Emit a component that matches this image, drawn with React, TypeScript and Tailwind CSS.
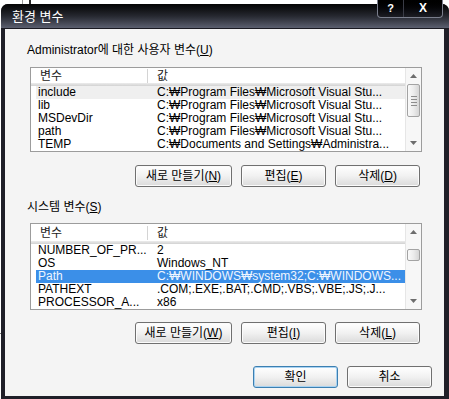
import React from "react";

const F = "font-['Liberation_Sans','Noto_Sans_CJK_KR',sans-serif]";

function U({ c }: { c: string }) {
  return <span className="underline underline-offset-[1px]">{c}</span>;
}

type Row = { name: string; value: string; sel?: "gray" | "blue" };

function Arrow({ up }: { up: boolean }) {
  return (
    <svg width="7" height="4" viewBox="0 0 7 4">
      {up ? (
        <path d="M0 4 L3.5 0 L7 4 Z" fill="#6d6d6d" />
      ) : (
        <path d="M0 0 L3.5 4 L7 0 Z" fill="#6d6d6d" />
      )}
    </svg>
  );
}

function Scroll({ spacer, thumb, grip }: { spacer: string; thumb: string; grip: boolean }) {
  return (
    <div className="w-[16px] flex flex-col bg-[#f7f7f7] border-l border-[#e6e6e6]">
      <div className="h-[16px] flex items-center justify-center">
        <Arrow up />
      </div>
      <div className={spacer} />
      <div
        className={`${thumb} ml-[1px] mr-[1px] rounded-[2px] border border-[#a3a3a3] bg-gradient-to-r from-[#fafafa] via-[#ececec] to-[#d6d6d6] flex flex-col items-center justify-center gap-[2px]`}
      >
        {grip && (
          <>
            <div className="w-[6px] h-px bg-[#8c8c8c]" />
            <div className="w-[6px] h-px bg-[#8c8c8c]" />
            <div className="w-[6px] h-px bg-[#8c8c8c]" />
            <div className="w-[6px] h-px bg-[#8c8c8c]" />
          </>
        )}
      </div>
      <div className="flex-1" />
      <div className="h-[16px] flex items-center justify-center">
        <Arrow up={false} />
      </div>
    </div>
  );
}

function ListBox({
  rows,
  height,
  spacer,
  thumb,
  grip,
}: {
  rows: Row[];
  height: string;
  spacer: string;
  thumb: string;
  grip: boolean;
}) {
  return (
    <div className={`ml-[25px] w-[392px] ${height} flex border border-[#9c9c9c] bg-white`}>
      <div className="flex-1 flex flex-col overflow-hidden">
        <div className="flex h-[17px] items-center text-[12px] text-[#222] bg-white">
          <div className="w-[117px] h-[14px] pl-[9px] leading-[14px] border-r border-[#d4d4d4]">변수</div>
          <div className="pl-[9px] leading-[14px]">값</div>
        </div>
        <div className="h-[3px] bg-gradient-to-b from-[#ececec] to-[#d2d2d2]" />
        {rows.map((r) => (
          <div
            key={r.name}
            className={`ml-[5px] flex h-[13px] shrink-0 text-[12px] leading-[13px] whitespace-nowrap ${
              r.sel === "blue"
                ? "bg-[#3b8fe8] text-[#eef5ff]"
                : r.sel === "gray"
                ? "bg-[#efefef] text-black"
                : "text-black"
            }`}
          >
            <div className="w-[119px] pl-[2px] overflow-hidden">{r.name}</div>
            <div className="pl-[2px]">{r.value}</div>
          </div>
        ))}
      </div>
      <Scroll spacer={spacer} thumb={thumb} grip={grip} />
    </div>
  );
}

function Btn({
  children,
  w,
  def,
}: {
  children: React.ReactNode;
  w: string;
  def?: boolean;
}) {
  return (
    <div
      className={`${w} h-[22px] rounded-[3px] border flex items-center justify-center text-[12px] leading-[14px] text-black bg-gradient-to-b from-[#ffffff] via-[#f1f1f1] to-[#dadada] ${
        def
          ? "border-[#3c7fb1] shadow-[inset_0_0_0_1px_#a9d3f2]"
          : "border-[#707070] shadow-[inset_0_0_0_1px_#fbfbfb]"
      }`}
    >
      {children}
    </div>
  );
}

const userRows: Row[] = [
  { name: "include", value: "C:₩Program Files₩Microsoft Visual Stu...", sel: "gray" },
  { name: "lib", value: "C:₩Program Files₩Microsoft Visual Stu..." },
  { name: "MSDevDir", value: "C:₩Program Files₩Microsoft Visual Stu..." },
  { name: "path", value: "C:₩Program Files₩Microsoft Visual Stu..." },
  { name: "TEMP", value: "C:₩Documents and Settings₩Administra..." },
];

const sysRows: Row[] = [
  { name: "NUMBER_OF_PR...", value: "2" },
  { name: "OS", value: "Windows_NT" },
  { name: "Path", value: "C:₩WINDOWS₩system32;C:₩WINDOWS...", sel: "blue" },
  { name: "PATHEXT", value: ".COM;.EXE;.BAT;.CMD;.VBS;.VBE;.JS;.J..." },
  { name: "PROCESSOR_A...", value: "x86" },
];

export default function App() {
  return (
    <div className={`relative w-[449px] h-[399px] bg-white overflow-hidden ${F}`}>
      <div className="absolute left-[22px] top-0 w-px h-[6px] bg-[#9a9a9a]" />
      <div className="absolute left-[29px] top-0 w-[2px] h-[6px] bg-[#2a2a2a]" />
      <div className="absolute left-0 top-[333px] w-[2px] h-px bg-[#777]" />
      <div className="flex pt-[4px] pl-[1px]">
        <div className="relative flex flex-col w-[448px] h-[395px] rounded-t-[7px] bg-[#1f1f28]">
          <div className="h-[25px] rounded-t-[7px] bg-gradient-to-b from-[#050505] via-[#262830] to-[#5c6070] border-b border-[#1a1a22] flex items-center pl-[11px]">
            <span className="text-[13px] leading-[15px] text-white">환경 변수</span>
          </div>
          <div className="absolute top-[-6px] right-[6px] w-[66px] h-[20px] rounded-b-[4px] border border-t-0 border-[#7a7e8c] bg-gradient-to-b from-[#000] to-[#1c1d24] flex">
            <div className="w-[26px] flex items-end justify-center pb-[3px] border-r border-[#3a3c46] text-white text-[11px] font-bold leading-[11px] font-['Liberation_Sans',sans-serif]">
              ?
            </div>
            <div className="flex-1 flex items-end justify-center pb-[3px] text-white text-[12px] font-bold leading-[11px] font-['Liberation_Sans',sans-serif]">
              X
            </div>
          </div>
          <div className="flex-1 flex flex-col bg-[#f4f4f4] border-l-[4px] border-r-[5px] border-b-[3px] border-[#1f1f28]">
            <div className="mt-[14px] pl-[22px] h-[14px] text-[12px] leading-[14px] text-black">
              Administrator에 대한 사용자 변수(<U c="U" />)
            </div>
            <div className="mt-[10px]">
              <ListBox rows={userRows} height="h-[85px]" spacer="h-0" thumb="h-[33px]" grip />
            </div>
            <div className="mt-[13px] flex justify-end pr-[24px] gap-[9px]">
              <Btn w="w-[97px]">
                새로 만들기(<U c="N" />)
              </Btn>
              <Btn w="w-[85px]">
                편집(<U c="E" />)
              </Btn>
              <Btn w="w-[85px]">
                삭제(<U c="D" />)
              </Btn>
            </div>
            <div className="mt-[13px] pl-[22px] h-[14px] text-[12px] leading-[14px] text-black">
              시스템 변수(<U c="S" />)
            </div>
            <div className="mt-[9px]">
              <ListBox rows={sysRows} height="h-[87px]" spacer="h-[9px]" thumb="h-[12px]" grip={false} />
            </div>
            <div className="mt-[12px] flex justify-end pr-[24px] gap-[9px]">
              <Btn w="w-[97px]">
                새로 만들기(<U c="W" />)
              </Btn>
              <Btn w="w-[85px]">
                편집(<U c="I" />)
              </Btn>
              <Btn w="w-[85px]">
                삭제(<U c="L" />)
              </Btn>
            </div>
            <div className="mt-[22px] flex justify-end pr-[12px] gap-[9px]">
              <Btn w="w-[85px]" def>
                확인
              </Btn>
              <Btn w="w-[85px]">취소</Btn>
            </div>
          </div>
        </div>
      </div>
    </div>
  );
}
